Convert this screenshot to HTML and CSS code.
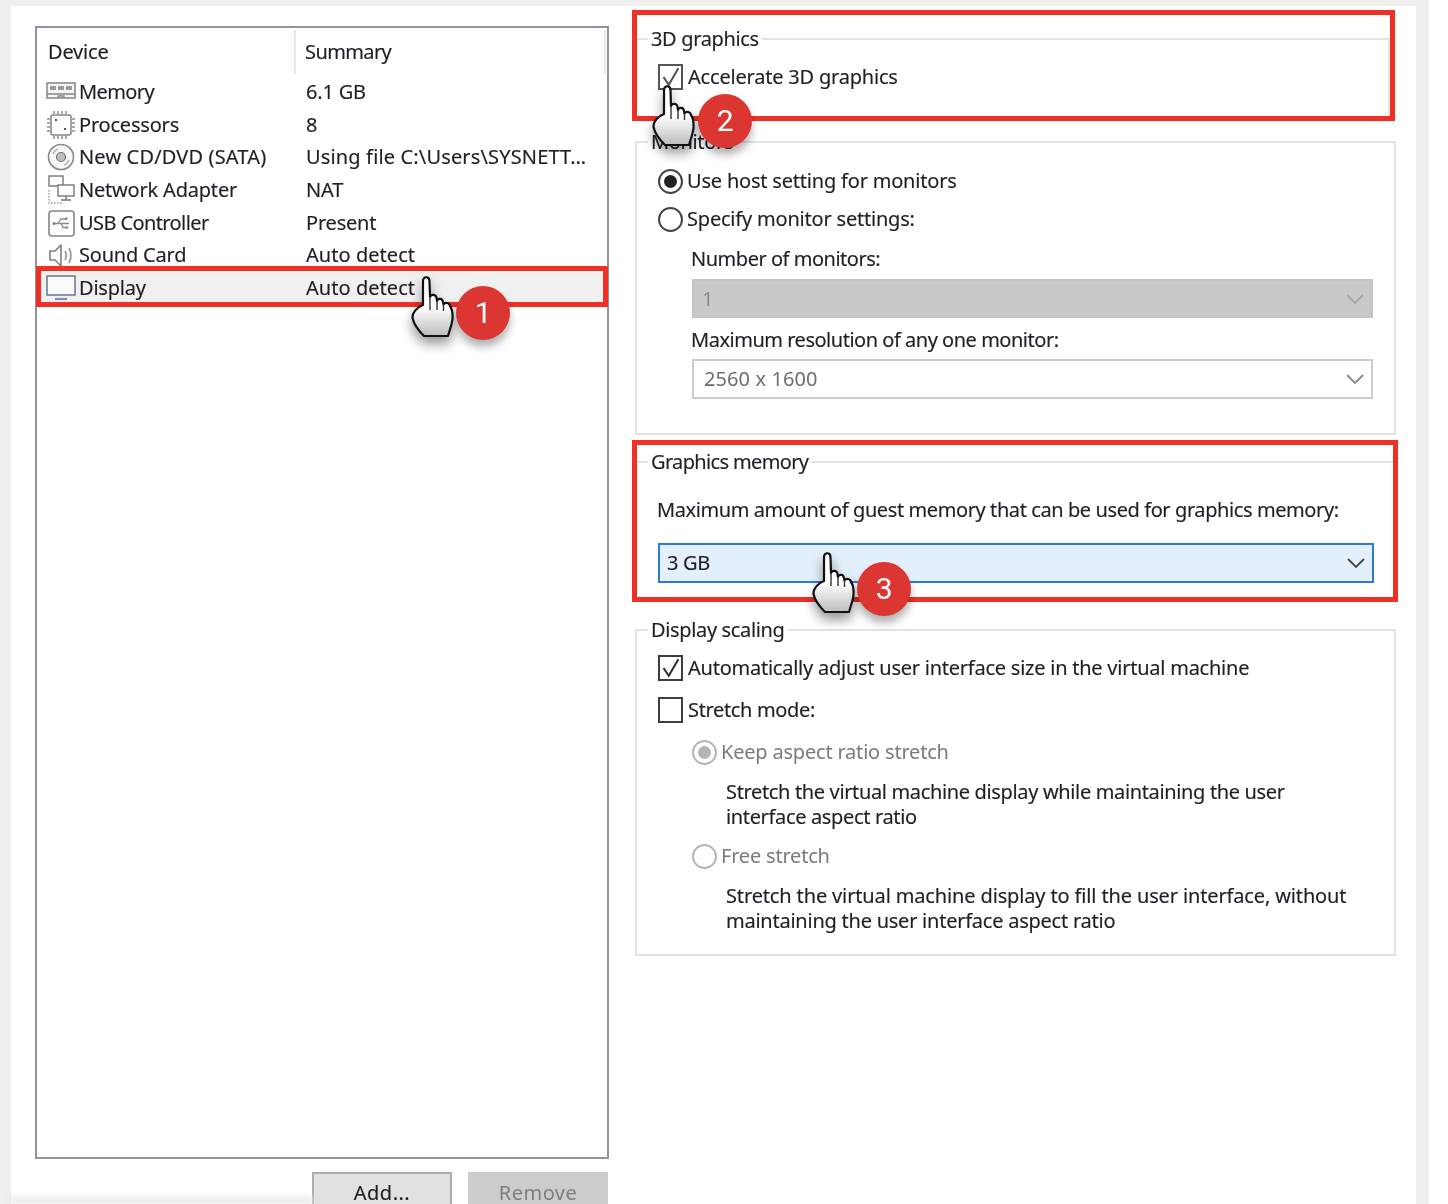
FILE: index.html
```html
<!DOCTYPE html>
<html lang="en">
<head>
<meta charset="utf-8">
<title>Display settings</title>
<link rel="stylesheet" href="styles.css">
</head>
<body>
<svg class="defs" width="0" height="0" aria-hidden="true">
  <defs>
    <linearGradient id="handfill" x1="0" y1="0" x2="0" y2="1">
      <stop offset="0.5" stop-color="#ffffff"/>
      <stop offset="1" stop-color="#bdbdbd"/>
    </linearGradient>
    <symbol id="hand" viewBox="-1 -1 44 62">
      <path d="M11 4C11-1 17.500-1 17.500 4L18 20C19 17 23.500 17 24.500 20.500L25 24C26 21 30.500 21 31 25L31.500 27.500C33 25 37.500 25.500 38 29C39.500 31 41 34 40.500 42C40 47 38.500 51 37.500 54L36 59L12 59C8 55 2 48 .5 41C0 36 5 30 11 28Z" fill="url(#handfill)" stroke="#111" stroke-width="2.200" stroke-linejoin="round"/>
      <path d="M18 20V33M25 24V33M31.500 27.500V34" fill="none" stroke="#333" stroke-width="1.400"/>
    </symbol>
  </defs>
</svg>
<div class="shot">
  <div class="panel">
    <section class="left">
      <div class="list">
        <div class="list-head">
          <div class="head-device">Device</div>
          <div class="head-summary tight">Summary</div>
        </div>
        <div class="row">
          <div class="cell-device">
            <svg class="ico" viewBox="0 0 30 30"><rect x="1" y="6" width="28" height="15" fill="#f4f4f4" stroke="#858585" stroke-width="1.500"/><path d="M1 17H29M12 21V19H18V21" fill="none" stroke="#858585" stroke-width="1.300"/><path d="M4 9h6v4H4zM12 9h6v4h-6zM20 9h6v4h-6z" fill="#9a9a9a"/></svg>
            <span class="tight">Memory</span>
          </div>
          <div>6.1 GB</div>
        </div>
        <div class="row">
          <div class="cell-device">
            <svg class="ico" viewBox="0 0 30 30"><rect x="5" y="5" width="20" height="20" rx="2" fill="#fff" stroke="#858585" stroke-width="1.500"/><path d="M8 1V4M12 1V4M16 1V4M20 1V4M8 26V29M12 26V29M16 26V29M20 26V29M1 9H4M1 13H4M1 17H4M1 21H4M26 9H29M26 13H29M26 17H29M26 21H29" stroke="#8c8c8c" stroke-width="1.400"/><rect x="9" y="9" width="2" height="2" fill="#555"/><rect x="18" y="18" width="2" height="2" fill="#555"/></svg>
            <span>Processors</span>
          </div>
          <div>8</div>
        </div>
        <div class="row">
          <div class="cell-device">
            <svg class="ico" viewBox="0 0 30 30"><circle cx="15" cy="15" r="12.500" fill="#f8f8f8" stroke="#8a8a8a" stroke-width="1.600"/><circle cx="15" cy="15" r="4.500" fill="#bdbdbd" stroke="#777" stroke-width="1.200"/><path d="M7 12A8.500 8.500 0 0 1 12 7M23 18A8.500 8.500 0 0 1 18 23" fill="none" stroke="#b5b5b5" stroke-width="1.500"/></svg>
            <span class="wide">New CD/DVD (SATA)</span>
          </div>
          <div class="wide">Using file C:\Users\SYSNETT…</div>
        </div>
        <div class="row">
          <div class="cell-device">
            <svg class="ico" viewBox="0 0 30 30"><rect x="3" y="1" width="14" height="10" fill="#fff" stroke="#777" stroke-width="1.400"/><rect x="12" y="10" width="16" height="11" fill="#fff" stroke="#777" stroke-width="1.400"/><path d="M20 21V25M15 25H25" stroke="#777" stroke-width="1.400"/><path d="M3 15V28H17" fill="none" stroke="#999" stroke-width="1.400" stroke-dasharray="1.500 1.500"/></svg>
            <span>Network Adapter</span>
          </div>
          <div>NAT</div>
        </div>
        <div class="row">
          <div class="cell-device">
            <svg class="ico" viewBox="0 0 30 30"><rect x="3" y="3" width="25" height="25" rx="3" fill="#fff" stroke="#858585" stroke-width="1.600"/><path d="M7 15.500H23M12 15.500L15 11H19M15 15.500L17 19.500H20" fill="none" stroke="#8a8a8a" stroke-width="1.300"/><circle cx="8" cy="15.500" r="1.600" fill="#888"/><rect x="19" y="9.500" width="2.500" height="2.500" fill="#888"/><circle cx="21" cy="19.500" r="1.300" fill="#888"/></svg>
            <span class="tight">USB Controller</span>
          </div>
          <div>Present</div>
        </div>
        <div class="row">
          <div class="cell-device">
            <svg class="ico" viewBox="0 0 30 30"><path d="M4 11V20H9L15 26V5L9 11Z" fill="#fff" stroke="#808080" stroke-width="1.600" stroke-linejoin="round"/><path d="M19 11C20.500 13 20.500 18 19 20M23 8C25.500 12 25.500 19 23 23" fill="none" stroke="#a0a0a0" stroke-width="2"/></svg>
            <span>Sound Card</span>
          </div>
          <div class="auto">Auto detect</div>
        </div>
        <div class="row row-selected">
          <div class="cell-device">
            <svg class="ico" viewBox="0 0 30 30"><rect x="1" y="3" width="28" height="19" fill="#fafafa" stroke="#65758c" stroke-width="1.500"/><path d="M9 26H21" stroke="#7d93ad" stroke-width="2.200"/></svg>
            <span>Display</span>
          </div>
          <div class="auto">Auto detect</div>
        </div>
      </div>
      <div class="buttons">
        <div class="btn">Add...</div>
        <div class="btn btn-disabled">Remove</div>
      </div>
    </section>

    <section class="right">
      <fieldset class="group group-3d">
        <legend>3D graphics</legend>
        <div class="opt opt-first">
          <span class="check"><svg viewBox="0 0 24 24"><path d="M4 12L10 21L21 2" fill="none" stroke="#555" stroke-width="2.400"/></svg></span>
          <span class="loose">Accelerate 3D graphics</span>
        </div>
      </fieldset>

      <fieldset class="group group-monitors">
        <legend>Monitors</legend>
        <div class="opt opt-host"><span class="radio radio-on"></span><span class="loose">Use host setting for monitors</span></div>
        <div class="opt"><span class="radio"></span><span class="loose">Specify monitor settings:</span></div>
        <div class="label label-first">Number of monitors:</div>
        <div class="select select-grey"><span>1</span><svg class="chev" viewBox="0 0 18 10"><path d="M1 1L9 9L17 1" fill="none" stroke="#a5a5a5" stroke-width="1.800"/></svg></div>
        <div class="label label-second">Maximum resolution of any one monitor:</div>
        <div class="select select-off"><span>2560 x 1600</span><svg class="chev" viewBox="0 0 18 10"><path d="M1 1L9 9L17 1" fill="none" stroke="#888" stroke-width="1.800"/></svg></div>
      </fieldset>

      <fieldset class="group group-memory">
        <legend class="legend-tight">Graphics memory</legend>
        <div class="memory-text">Maximum amount of guest memory that can be used for graphics memory:</div>
        <div class="select select-focus"><span>3 GB</span><svg class="chev" viewBox="0 0 18 10"><path d="M1 1L9 9L17 1" fill="none" stroke="#444" stroke-width="1.800"/></svg></div>
      </fieldset>

      <fieldset class="group group-scaling">
        <legend>Display scaling</legend>
        <div class="opt opt-scale">
          <span class="check check-dark"><svg viewBox="0 0 24 24"><path d="M4 12L10 21L21 2" fill="none" stroke="#333" stroke-width="2.400"/></svg></span>
          <span class="auto-adjust">Automatically adjust user interface size in the virtual machine</span>
        </div>
        <div class="opt opt-stretch"><span class="check check-dark"></span><span>Stretch mode:</span></div>
        <div class="sub">
          <div class="opt opt-off"><span class="radio radio-off radio-off-on"></span><span class="loose">Keep aspect ratio stretch</span></div>
          <p class="desc">Stretch the virtual machine display while maintaining the user<br>interface aspect ratio</p>
          <div class="opt opt-off opt-free"><span class="radio radio-off"></span><span class="loose">Free stretch</span></div>
          <p class="desc desc-loose">Stretch the virtual machine display to fill the user interface, without<br><span class="desc-second">maintaining the user interface aspect ratio</span></p>
        </div>
      </fieldset>
    </section>
  </div>

  <div class="smudge"></div>
  <div class="mark mark-display"></div>
  <div class="mark mark-3d"></div>
  <div class="mark mark-memory"></div>

  <svg class="hand hand-1"><use href="#hand"/></svg>
  <div class="badge badge-1">1</div>
  <svg class="hand hand-2"><use href="#hand"/></svg>
  <div class="badge badge-2">2</div>
  <svg class="hand hand-3"><use href="#hand"/></svg>
  <div class="badge badge-3">3</div>
</div>
</body>
</html>
```

FILE: styles.css
```css
* { box-sizing: border-box; }
html, body { margin: 0; padding: 0; background: #fff; }
body { width: 1448px; height: 1204px; overflow: hidden; }
.defs { position: absolute; }

.shot {
  position: relative;
  width: 1429px;
  height: 1204px;
  padding: 6px 13px 0 11px;
  background: #efefef;
  overflow: hidden;
  font-family: "Noto Sans", sans-serif;
  font-size: 20px;
  line-height: 26px;
  letter-spacing: -0.35px;
  color: #1f1f27;
  -webkit-text-stroke: 0.15px #1f1f27;
  filter: blur(0.7px);
}
.panel {
  display: flex;
  height: 1198px;
  padding: 20px 0 0 24px;
  background: #fff;
}

/* left column */
.left { width: 574px; flex: none; letter-spacing: -0.2px; }
.list {
  height: 1133px;
  border: 2px solid #8f939e;
  background: #fff;
}
.list-head { display: flex; height: 48px; padding-top: 2px; }
.head-device {
  width: 259px;
  height: 44px;
  padding: 9px 0 0 11px;
  border-right: 2px solid #e8e8e8;
}
.head-summary {
  width: 310px;
  height: 44px;
  padding: 9px 0 0 9px;
  border-right: 2px solid #e8e8e8;
}
.row {
  display: grid;
  grid-template-columns: 269px 1fr;
  align-items: center;
  height: 32.6px;
}
.wide { letter-spacing: 0.15px; }
.tight { letter-spacing: -0.6px; }
.auto { letter-spacing: 0.05px; }
.loose { letter-spacing: -0.2px; }
.cell-device { display: flex; align-items: center; padding-left: 9px; }
.ico { width: 30px; height: 30px; margin-right: 3px; flex: none; }
.row-selected { background: #f0f0f0; }

.buttons {
  display: flex;
  justify-content: flex-end;
  gap: 16px;
  margin-top: 13px;
  padding-right: 1px;
}
.btn {
  width: 140px;
  height: 42px;
  padding-top: 6px;
  text-align: center;
  background: #e1e1e1;
  border: 2px solid #adadad;
  letter-spacing: 0.5px;
}
.btn-disabled {
  background: #cccccc;
  border-color: #cccccc;
  color: #7d7d85;
  -webkit-text-stroke: 0;
}

/* right column */
.right {
  display: flex;
  flex-direction: column;
  width: 761px;
  margin-left: 26px;
}
.group {
  margin: 0;
  padding: 0;
  border: 2px solid #e3e3e3;
  min-width: 0;
}
.group legend {
  margin-left: 11px;
  padding: 0 3px;
  height: 26px;
}
.group .legend-tight { letter-spacing: -0.65px; }
.group-3d { height: 94px; width: 755px; }
.group-monitors { height: 306px; margin-top: 9px; }
.group-memory { height: 151px; margin-top: 14px; }
.group-scaling { height: 339px; margin-top: 17px; }

.opt { display: flex; align-items: center; height: 38px; padding-left: 21px; }
.opt-first { margin-top: 6px; }
.opt-host { margin-top: 7px; }
.opt-scale { margin-top: 5px; height: 40px; }
.opt-stretch { height: 44px; }
.auto-adjust { letter-spacing: -0.24px; }

.check {
  width: 25px;
  height: 26px;
  margin-right: 5px;
  flex: none;
  border: 2px solid #555;
  background: #fff;
}
.check svg { display: block; width: 21px; height: 22px; }
.check-dark { border-color: #3d3d3d; }

.radio {
  position: relative;
  width: 25px;
  height: 25px;
  margin-right: 4px;
  flex: none;
  border: 2px solid #444;
  border-radius: 50%;
  background: #fff;
}
.radio-on::after {
  content: "";
  position: absolute;
  inset: 4px;
  border-radius: 50%;
  background: #222;
}
.radio-off { border-color: #b5b5b5; }
.radio-off-on::after {
  content: "";
  position: absolute;
  inset: 4px;
  border-radius: 50%;
  background: #b5b5b5;
}

.label { padding-left: 54px; letter-spacing: -0.48px; }
.label-first { margin-top: 8px; }
.label-second { margin-top: 9px; }

.select {
  display: flex;
  align-items: center;
  justify-content: space-between;
  width: 681px;
  height: 40px;
  margin-left: 55px;
  margin-top: 7px;
  padding: 0 7px 0 8px;
}
.chev { width: 18px; height: 10px; flex: none; }
.select-grey {
  height: 39px;
  margin-top: 7px;
  background: #c9c9c9;
  border: 2px solid #c4c4c4;
  color: #8c8c8c;
  -webkit-text-stroke: 0;
}
.select-off {
  margin-top: 6px;
  padding-left: 10px;
  background: #fff;
  border: 2px solid #cdcdcd;
  color: #6e6e6e;
  -webkit-text-stroke: 0;
  letter-spacing: 0.1px;
}
.select-focus {
  width: 716px;
  margin-left: 21px;
  margin-top: 7px;
  padding-left: 7px;
  background: #e3effa;
  border: 2px solid #2f78d8;
}

.memory-text {
  height: 39px;
  margin-top: 22px;
  padding-left: 20px;
  letter-spacing: -0.41px;
  white-space: nowrap;
}

.sub { padding-left: 55px; }
.opt-off { padding-left: 0; color: #7a7a7a; -webkit-text-stroke: 0; height: 38px; margin-top: 1px; }
.opt-free { margin-top: 8px; }
.desc { margin: 8px 0 0 34px; line-height: 25px; white-space: nowrap; }
.desc-loose { letter-spacing: -0.14px; }
.desc-second { letter-spacing: -0.24px; }

/* overlays */
.smudge {
  position: absolute;
  left: 8px;
  top: 1197px;
  width: 305px;
  height: 7px;
  background: #e9e9e9;
  filter: blur(3px);
}
.mark { position: absolute; border: 5px solid #ee3124; }
.mark-display { left: 36px; top: 266px; width: 572px; height: 41px; }
.mark-3d { left: 632px; top: 10px; width: 763px; height: 111px; }
.mark-memory { left: 632px; top: 440px; width: 766px; height: 162px; }

.hand {
  position: absolute;
  width: 44px;
  height: 62px;
  filter: drop-shadow(0 7px 6px rgba(0,0,0,0.4));
}
.hand-1 { left: 411px; top: 276px; }
.hand-2 { left: 652px; top: 85px; }
.hand-3 { left: 812px; top: 552px; }

.badge {
  position: absolute;
  width: 54px;
  height: 54px;
  border-radius: 50%;
  background: #dc3632;
  color: #fff;
  -webkit-text-stroke: 0;
  font-family: "Roboto", sans-serif;
  font-size: 30px;
  line-height: 54px;
  text-align: center;
  box-shadow: 0 7px 9px rgba(0,0,0,0.3);
}
.badge-1 { left: 456px; top: 286px; }
.badge-2 { left: 698px; top: 94px; }
.badge-3 { left: 857px; top: 562px; }
```
